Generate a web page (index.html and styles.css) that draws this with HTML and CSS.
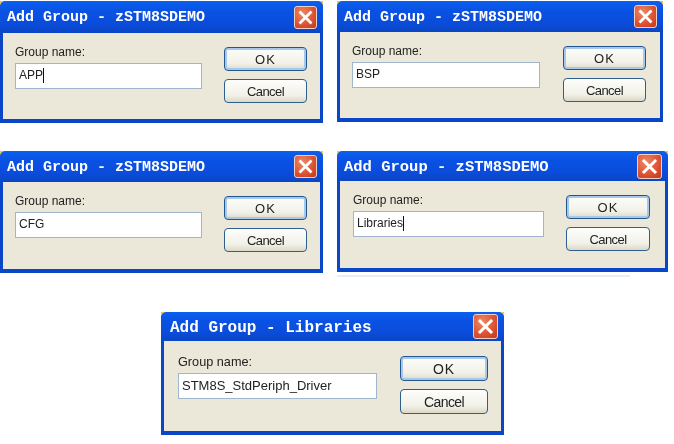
FILE: index.html
```html
<!DOCTYPE html>
<html lang="en">
<head>
<meta charset="utf-8">
<title>Add Group dialogs</title>
<link rel="stylesheet" href="styles.css">
</head>
<body>
<main class="desktop">
  <section class="window win-app">
    <div class="frame">
      <header class="titlebar"><h2 class="title">Add Group - zSTM8SDEMO</h2>
        <span class="close"><svg viewBox="0 0 23 23" class="close-x"><path d="M6 6L17 17M17 6L6 17"/></svg></span></header>
      <div class="body">
        <div class="field"><label class="label">Group name:</label><div class="input">APP<span class="caret"></span></div></div>
        <div class="actions"><button class="btn btn-default">OK</button><button class="btn">Cancel</button></div>
      </div>
    </div>
  </section>
  <section class="window win-bsp">
    <div class="frame">
      <header class="titlebar"><h2 class="title">Add Group - zSTM8SDEMO</h2>
        <span class="close"><svg viewBox="0 0 23 23" class="close-x"><path d="M6 6L17 17M17 6L6 17"/></svg></span></header>
      <div class="body">
        <div class="field"><label class="label">Group name:</label><div class="input">BSP</div></div>
        <div class="actions"><button class="btn btn-default">OK</button><button class="btn">Cancel</button></div>
      </div>
    </div>
  </section>
  <section class="window win-cfg">
    <div class="frame">
      <header class="titlebar"><h2 class="title">Add Group - zSTM8SDEMO</h2>
        <span class="close"><svg viewBox="0 0 23 23" class="close-x"><path d="M6 6L17 17M17 6L6 17"/></svg></span></header>
      <div class="body">
        <div class="field"><label class="label">Group name:</label><div class="input">CFG</div></div>
        <div class="actions"><button class="btn btn-default">OK</button><button class="btn">Cancel</button></div>
      </div>
    </div>
  </section>
  <section class="window win-lib">
    <div class="frame">
      <header class="titlebar"><h2 class="title">Add Group - zSTM8SDEMO</h2>
        <span class="close"><svg viewBox="0 0 23 23" class="close-x"><path d="M6 6L17 17M17 6L6 17"/></svg></span></header>
      <div class="body">
        <div class="field"><label class="label">Group name:</label><div class="input">Libraries<span class="caret"></span></div></div>
        <div class="actions"><button class="btn btn-default">OK</button><button class="btn">Cancel</button></div>
      </div>
    </div>
  </section>
  <div class="stray-line"></div>
  <section class="window win-std">
    <div class="frame">
      <header class="titlebar"><h2 class="title">Add Group - Libraries</h2>
        <span class="close"><svg viewBox="0 0 23 23" class="close-x"><path d="M6 6L17 17M17 6L6 17"/></svg></span></header>
      <div class="body">
        <div class="field"><label class="label">Group name:</label><div class="input">STM8S_StdPeriph_Driver</div></div>
        <div class="actions"><button class="btn btn-default">OK</button><button class="btn">Cancel</button></div>
      </div>
    </div>
  </section>
</main>
</body>
</html>
```
FILE: styles.css
```css
* { box-sizing: border-box; }
html, body { margin: 0; padding: 0; background: #fff; }
.desktop { position: relative; width: 674px; height: 444px; overflow: hidden; }

.window {
  position: absolute;
  background: linear-gradient(#f0c24a 0 5px, transparent 5px);
  filter: blur(0.6px);
  --title-h: 32px;
  --title-left: 7px;
  --title-size: 15px;
  --close-size: 23px;
  --input-w: 187px;
  --btn-w: 83px;
  --btn-h: 24px;
  --btn-gap: 8px;
  --body-top: 12px;
  --body-left: 12px;
  --body-right: 13px;
  --text-size: 12px;
  --input-size: 12px;
  --btn-size: 13px;
  --actions-top: 2px;
}
.win-app { left: 0; top: 1px; width: 323px; height: 122px; }
.win-bsp { left: 337px; top: 1px; width: 326px; height: 121px; --title-h: 31px; --input-w: 188px; --body-right: 14px; }
.win-cfg { left: 0; top: 151px; width: 323px; height: 122px; --title-h: 31px; }
.win-lib {
  left: 337px; top: 151px; width: 331px; height: 121px;
  --title-h: 30px; --title-size: 15.5px; --close-size: 25px;
  --body-left: 13px; --input-w: 191px; --btn-w: 84px; --body-right: 15px;
}
.win-std {
  left: 161px; top: 312px; width: 343px; height: 123px;
  --title-h: 29px; --title-left: 9px; --title-size: 16px; --close-size: 25px;
  --body-top: 14px; --body-left: 14px; --input-w: 199px; --btn-w: 88px; --btn-h: 25px; --body-right: 13px;
  --text-size: 12.7px; --input-size: 13px; --btn-size: 14px; --actions-top: 1px;
}

.frame {
  height: 100%;
  display: flex;
  flex-direction: column;
  border-radius: 6px 6px 0 0;
  background: #0a46c8;
  padding: 0 3px 4px 3px;
}
.titlebar {
  flex: none;
  height: var(--title-h);
  margin: 0 -3px;
  padding: 0 6px 0 var(--title-left);
  display: flex;
  align-items: center;
  justify-content: space-between;
  border-radius: 6px 6px 0 0;
  background: linear-gradient(#0a60ee 0, #0a52e4 30%, #0a4cdc 70%, #0a46c4 100%);
}
.title {
  margin: 0;
  padding-top: 2px;
  font: bold var(--title-size)/18px "Liberation Mono", monospace;
  color: #fff;
  white-space: pre;
}
.close {
  flex: none;
  width: var(--close-size);
  height: var(--close-size);
  border: 1px solid #f4d0c0;
  border-radius: 3px;
  background: radial-gradient(circle at 35% 30%, #ec8a66, #dc5030 60%, #c23a18);
  display: flex;
  align-items: center;
  justify-content: center;
}
.close-x { width: 100%; height: 100%; }
.close-x path { fill: none; stroke: #fff; stroke-width: 3; stroke-linecap: square; }

.body {
  flex: 1;
  display: flex;
  justify-content: space-between;
  padding: var(--body-top) var(--body-right) 0 var(--body-left);
  background: #ebe8d9;
  font: var(--text-size)/15px "Liberation Sans", sans-serif;
  color: #222;
}
.label { display: block; }
.input {
  width: var(--input-w);
  height: 26px;
  margin-top: 3px;
  padding: 0 0 2px 3px;
  display: flex;
  align-items: center;
  background: #fff;
  border: 1px solid #9fb6cc;
  font-size: var(--input-size);
}
.caret { width: 1px; height: 15px; background: #111; }

.actions {
  display: flex;
  flex-direction: column;
  gap: var(--btn-gap);
  padding-top: var(--actions-top);
}
.btn {
  width: var(--btn-w);
  height: var(--btn-h);
  padding: 0;
  border: 1px solid #2f5f8e;
  border-radius: 4px;
  background: linear-gradient(#fdfdfb, #f2f1e8 70%, #dcd8c6);
  font: var(--btn-size)/1 "Liberation Sans", sans-serif;
  letter-spacing: -0.6px;
  color: #222;
}
.btn-default {
  border: 1px solid #22568e;
  box-shadow: inset 0 0 0 2px #a8c8ea;
  letter-spacing: 1px;
}

.stray-line {
  position: absolute;
  left: 337px;
  top: 275px;
  width: 293px;
  height: 2px;
  background: #e8eef8;
}
```
